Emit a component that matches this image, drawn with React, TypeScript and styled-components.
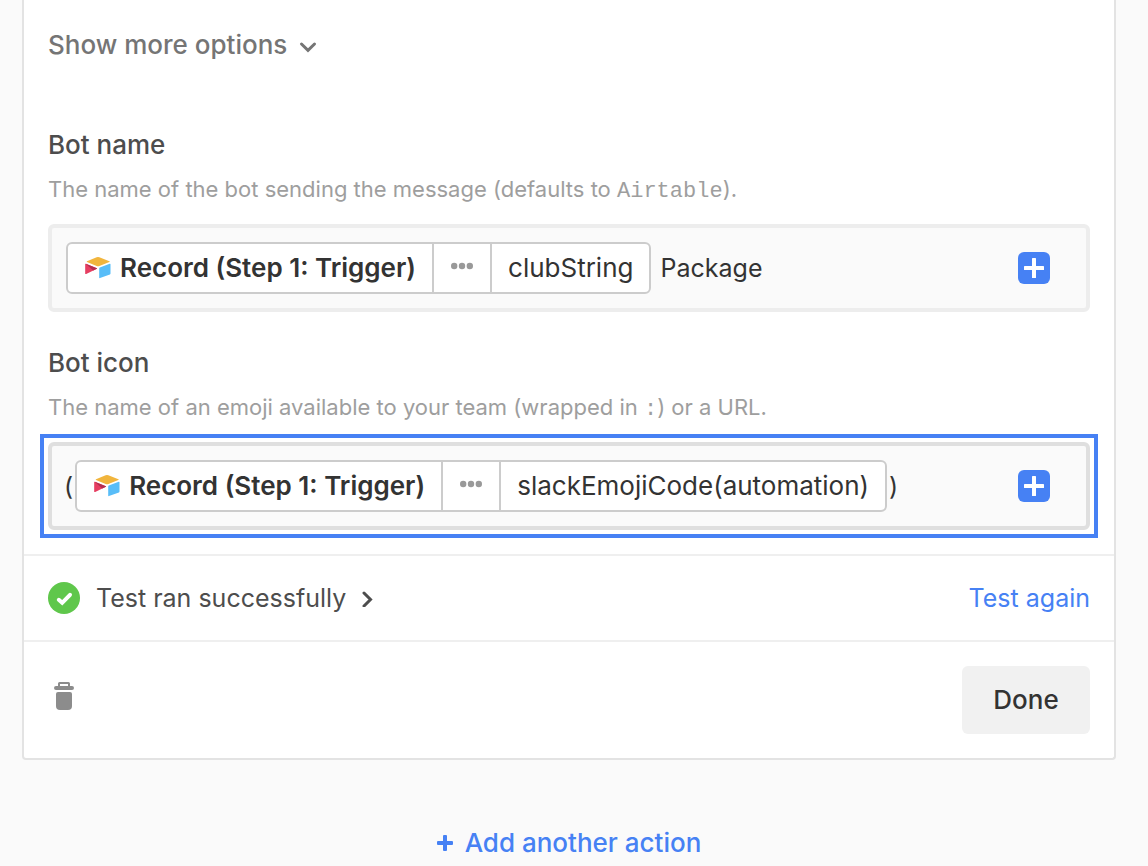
import React from "react";
import styled, { createGlobalStyle, css } from "styled-components";

const color = {
  page: "#fafafa",
  text: "#333333",
  label: "#4d4d4d",
  quiet: "#757575",
  help: "#9e9e9e",
  blue: "#4681f4",
};

const GlobalStyle = createGlobalStyle`
  *, *::before, *::after { box-sizing: border-box; }
  body {
    margin: 0;
    background: ${color.page};
    color: ${color.text};
    font-family: Inter, "Liberation Sans", sans-serif;
    font-size: 26px;
    line-height: 30px;
  }
  button, input { font: inherit; color: inherit; }
  svg { display: block; flex: none; }
`;

const Page = styled.main`
  display: flex;
  flex-direction: column;
  padding: 0 32px 8px 22px;
`;

const Card = styled.section`
  background: #ffffff;
  border: 2px solid #e3e3e3;
  border-top: 0;
  border-radius: 0 0 4px 4px;
`;

const Options = styled.div`
  display: flex;
  flex-direction: column;
  align-items: stretch;
  padding: 30px 24px 24px;
`;

const PlainButton = styled.button`
  display: inline-flex;
  align-items: center;
  padding: 0;
  border: 0;
  background: none;
  cursor: pointer;
`;

const MoreButton = styled(PlainButton)`
  align-self: flex-start;
  gap: 12px;
  margin-bottom: 70px;
  color: ${color.quiet};
  font-weight: 500;
`;

const Field = styled.div`
  display: flex;
  flex-direction: column;
  & + & { margin-top: 36px; }
`;

const Label = styled.label`
  color: ${color.label};
  font-weight: 500;
`;

const Help = styled.p`
  margin: 14px 0 20px;
  color: ${color.help};
  font-size: 22px;
`;

const Code = styled.code`
  font-family: "Liberation Mono", monospace;
  font-size: 22px;
  line-height: 20px;
`;

const FocusRing = styled.div<{ $focused?: boolean }>`
  ${(p) =>
    p.$focused &&
    css`
      outline: 4px solid ${color.blue};
      outline-offset: 4px;
    `}
`;

const TokenInput = styled.div<{ $focused?: boolean }>`
  display: flex;
  align-items: center;
  padding: 14px 36px 14px 12px;
  border: 4px solid ${(p) => (p.$focused ? "#dfdfdf" : "#ededed")};
  border-radius: 6px;
  background: ${color.page};
`;

const TextPart = styled.input<{ $grow?: boolean }>`
  padding: 0;
  border: 0;
  outline: 0;
  background: none;
  min-width: 0;
  font-size: 25px;
  ${(p) => (p.$grow ? "flex: 1;" : "field-sizing: content;")}
`;

const Token = styled.span`
  display: inline-flex;
  height: 52px;
  margin: 0 2px;
  border: 2px solid #cccccc;
  border-radius: 6px;
  background: #ffffff;
`;

const Segment = styled(PlainButton)<{ $strong?: boolean }>`
  gap: 8px;
  padding: 0 16px;
  white-space: nowrap;
  font-weight: ${(p) => (p.$strong ? 600 : 400)};
  & + & { border-left: 2px solid #cccccc; }
`;

const InsertButton = styled(PlainButton)`
  justify-content: center;
  width: 32px;
  height: 32px;
  border-radius: 6px;
  background: ${color.blue};
`;

const Row = styled.div`
  display: flex;
  align-items: center;
  justify-content: space-between;
  padding: 0 24px;
  border-top: 2px solid #efefef;
`;

const ResultRow = styled(Row)`
  height: 86px;
  font-size: 25px;
`;

const FooterRow = styled(Row)`
  height: 118px;
`;

const ResultButton = styled(PlainButton)`
  gap: 16px;
  color: ${color.label};
`;

const TestLink = styled.a`
  color: ${color.blue};
  text-decoration: none;
`;

const DeleteButton = styled(PlainButton)`
  padding-bottom: 8px;
`;

const DoneButton = styled(PlainButton)`
  justify-content: center;
  width: 128px;
  height: 68px;
  border-radius: 6px;
  background: #f1f1f1;
  font-weight: 500;
`;

const AddButton = styled(PlainButton)`
  align-self: center;
  gap: 12px;
  margin-top: 68px;
  color: ${color.blue};
  font-weight: 500;
`;

const ChevronDown = () => (
  <svg width="18" height="16" viewBox="0 0 18 16" fill="none" stroke="currentColor" strokeWidth="3">
    <path d="M2.5 7 L9 13.3 L15.5 7" strokeLinecap="round" />
  </svg>
);

const ChevronRight = () => (
  <svg width="12" height="18" viewBox="0 0 12 18" fill="none" stroke="currentColor" strokeWidth="3">
    <path d="M2 4 L8.5 10.5 L2 17" strokeLinecap="round" />
  </svg>
);

const BaseLogo = () => (
  <svg width="28" height="24" viewBox="0 0 28 24">
    <path d="M12.6 1.3 Q14 .8 15.4 1.3 L25.4 5.2 Q26.2 5.6 25.4 6 L15.4 9.9 Q14 10.4 12.6 9.9 L3 6 Q2.2 5.6 3 5.2 Z" fill="#f1b53d" />
    <path d="M15.2 12.4 Q15.2 11.8 15.8 11.6 L25.7 7.7 Q26.5 7.5 26.5 8.2 V17.6 Q26.5 18.2 25.9 18.5 L16 22.1 Q15.2 22.4 15.2 21.7 Z" fill="#58bdf8" />
    <path d="M1.2 8.4 Q1.2 7.5 2 7.8 L12.9 12.3 Q13.3 12.5 12.9 12.7 L2.2 17.9 Q1.2 18.3 1.2 17.4 Z" fill="#e63e61" />
    <path d="M1.7 7.7 L12.9 12.3 Q13.3 12.5 12.9 12.7 L9.2 14.5 Z" fill="#b22e50" />
  </svg>
);

const Dots = () => (
  <svg width="24" height="12" viewBox="0 0 24 12" fill="#999999">
    <circle cx="4.2" cy="4" r="3.2" />
    <circle cx="12" cy="4" r="3.2" />
    <circle cx="19.8" cy="4" r="3.2" />
  </svg>
);

const WhitePlus = () => (
  <svg width="20" height="20" viewBox="0 0 20 20" fill="#ffffff">
    <rect x="8" y="0" width="4" height="20" rx="0.6" />
    <rect x="0" y="8" width="20" height="4" rx="0.6" />
  </svg>
);

const BluePlus = () => (
  <svg width="16" height="16" viewBox="0 0 16 16" fill="currentColor">
    <rect x="6" y="0" width="4" height="16" rx="1" />
    <rect x="0" y="6" width="16" height="4" rx="1" />
  </svg>
);

const SuccessIcon = () => (
  <svg width="32" height="32" viewBox="0 0 32 32" fill="none">
    <circle cx="16" cy="16" r="16" fill="#5fc74b" />
    <path d="M10.8 17.8 L14.2 20.8 L22 12.8" stroke="#ffffff" strokeWidth="4" strokeLinecap="round" />
  </svg>
);

const TrashIcon = () => (
  <svg width="32" height="32" viewBox="0 0 32 32" fill="#8c8c8c">
    <path d="M10 6 V3.5 Q10 2 11.5 2 H20.5 Q22 2 22 3.5 V6 H24 Q26 6 26 8 Q26 10 24 10 H8 Q6 10 6 8 Q6 6 8 6 Z M12 4 V6 H20 V4 Z" fillRule="evenodd" />
    <path d="M10 12 H22 Q24 12 24 14 V26 Q24 30 20 30 H12 Q8 30 8 26 V14 Q8 12 10 12 Z" />
  </svg>
);

const RecordToken = ({ value }: { value: string }) => (
  <Token>
    <Segment type="button" $strong>
      <BaseLogo />
      Record (Step 1: Trigger)
    </Segment>
    <Segment type="button" aria-label="Show path">
      <Dots />
    </Segment>
    <Segment type="button">{value}</Segment>
  </Token>
);

export default function App() {
  return (
    <>
      <GlobalStyle />
      <Page>
        <Card>
          <Options>
            <MoreButton type="button">
              Show more options
              <ChevronDown />
            </MoreButton>

            <Field>
              <Label htmlFor="bot-name">Bot name</Label>
              <Help id="bot-name-help">
                The name of the bot sending the message (defaults to <Code>Airtable</Code>).
              </Help>
              <FocusRing>
                <TokenInput>
                  <RecordToken value="clubString" />
                  <TextPart id="bot-name" aria-describedby="bot-name-help" $grow defaultValue=" Package" />
                  <InsertButton type="button" aria-label="Insert value">
                    <WhitePlus />
                  </InsertButton>
                </TokenInput>
              </FocusRing>
            </Field>

            <Field>
              <Label htmlFor="bot-icon">Bot icon</Label>
              <Help id="bot-icon-help">
                The name of an emoji available to your team (wrapped in <Code>:</Code>) or a URL.
              </Help>
              <FocusRing $focused>
                <TokenInput $focused>
                  <TextPart aria-label="Text before value" defaultValue="(" />
                  <RecordToken value="slackEmojiCode(automation)" />
                  <TextPart id="bot-icon" aria-describedby="bot-icon-help" $grow defaultValue=")" />
                  <InsertButton type="button" aria-label="Insert value">
                    <WhitePlus />
                  </InsertButton>
                </TokenInput>
              </FocusRing>
            </Field>
          </Options>

          <ResultRow>
            <ResultButton type="button">
              <SuccessIcon />
              Test ran successfully
              <ChevronRight />
            </ResultButton>
            <TestLink href="#test">Test again</TestLink>
          </ResultRow>

          <FooterRow>
            <DeleteButton type="button" aria-label="Delete action">
              <TrashIcon />
            </DeleteButton>
            <DoneButton type="button">Done</DoneButton>
          </FooterRow>
        </Card>

        <AddButton type="button">
          <BluePlus />
          Add another action
        </AddButton>
      </Page>
    </>
  );
}
